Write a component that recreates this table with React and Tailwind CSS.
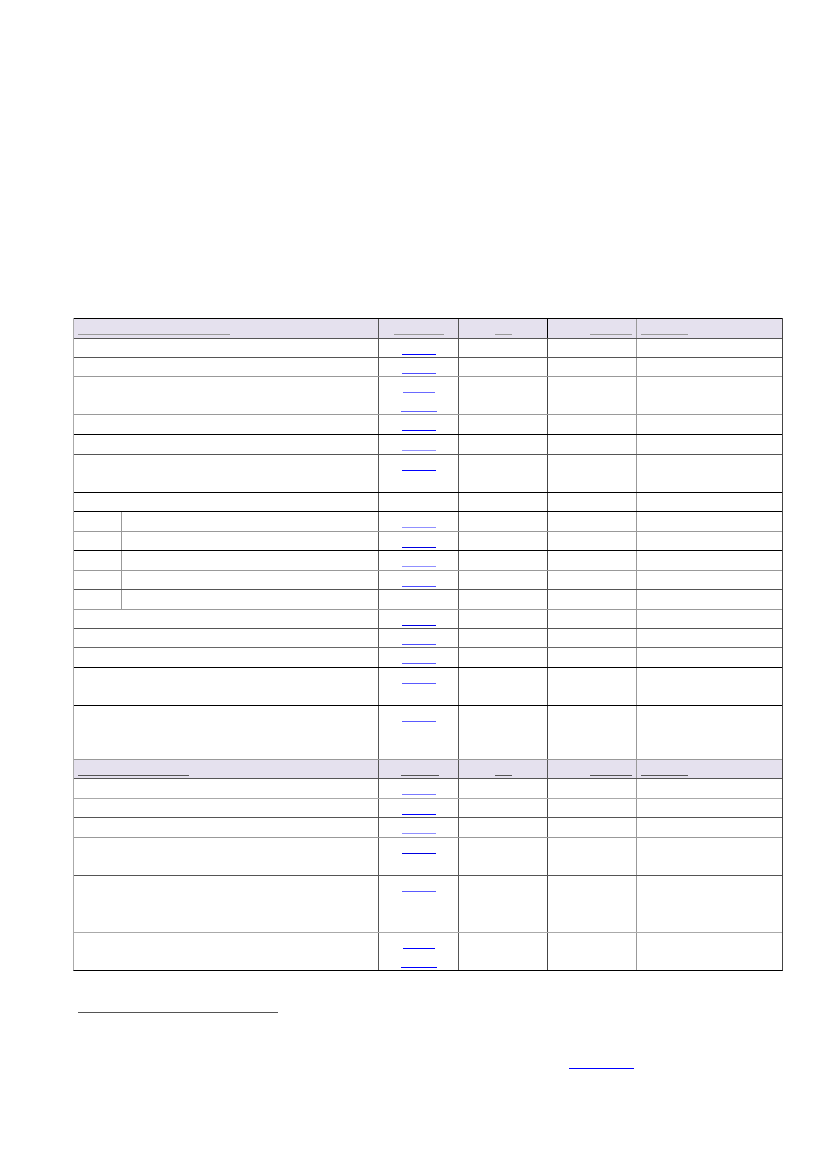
import React from "react";

const rows = [
  { h: 19, line: "border-[#555]", links: ["border-[#0000ff]"] },
  { h: 19, line: "border-[#555]", links: ["border-[#4d4dff]"] },
  { h: 38, line: "border-[#999]", links: ["border-[#6a6aff]", "border-[#6060ff]"], wideLast: true },
  { h: 20, line: "border-[#9a9a9a]", links: ["border-[#0000ff]"] },
  { h: 20, line: "border-[#000]", links: ["border-[#9090ff]"] },
  { h: 38, line: "border-[#555]", links: ["border-[#0000ff]"] },
  { h: 19, line: "border-[#000]", links: [] },
  { h: 20, line: "border-[#000]", links: ["border-[#9090ff]"], sub: true },
  { h: 19, line: "border-[#999]", links: ["border-[#0000e0]"], sub: true },
  { h: 20, line: "border-[#000]", links: ["border-[#9090ff]"], sub: true },
  { h: 19, line: "border-[#999]", links: ["border-[#4d4dff]"], sub: true },
  { h: 20, line: "border-[#555]", links: [], sub: true },
  { h: 19, line: "border-[#999]", links: ["border-[#0000e0]"] },
  { h: 19, line: "border-[#555]", links: ["border-[#4d4dff]"] },
  { h: 20, line: "border-[#666]", links: ["border-[#5a5aff]"] },
  { h: 38, line: "border-[#000]", links: ["border-[#5a5aff]"] },
  { h: 54, line: "border-[#000]", links: ["border-[#5a5aff]"] },
  { header: true, h: 19, line: "border-[#999]", dark: true },
  { h: 20, line: "border-[#555]", links: ["border-[#7a7aff]"] },
  { h: 19, line: "border-[#aaa]", links: ["border-[#0000ff]"] },
  { h: 20, line: "border-[#555]", links: ["border-[#9090ff]"] },
  { h: 38, line: "border-[#999]", links: ["border-[#0000e0]"] },
  { h: 57, line: "border-[#555]", links: ["border-[#5a5aff]"] },
  { h: 38, line: "border-[#aaa]", links: ["border-[#0000ff]", "border-[#0000ff]"], wideLast: true },
];

function LinkLines({ links = [], wideLast }) {
  return (
    <div className="flex flex-col items-center">
      {links.map((c, i) => (
        <div key={i} className="h-[19px] flex justify-center">
          <span
            className={
              "block h-[16px] border-b " +
              c +
              (wideLast && i === links.length - 1 ? " w-[36px]" : i === 0 && wideLast ? " w-[32px]" : " w-[34px]")
            }
          />
        </div>
      ))}
    </div>
  );
}

function HeaderRow({ h, line, dark }) {
  const u = dark ? "border-[#555]" : "border-[#999]";
  return (
    <div className={"flex bg-[#e5e1ee] border-t " + line} style={{ height: h }}>
      <div className="w-[304px] pl-[4px]">
        <span className={"block h-[16px] border-b " + u + (dark ? " w-[111px]" : " w-[152px]")} />
      </div>
      <div className="w-[80px] border-l border-[#555] flex justify-center">
        <span className={"block h-[16px] border-b " + u + (dark ? " w-[38px] ml-[3px]" : " w-[50px]")} />
      </div>
      <div className="w-[89px] border-l border-[#555] flex justify-center">
        <span className={"block h-[16px] border-b " + u + " w-[17px]"} />
      </div>
      <div className={"w-[89px] border-l flex justify-end pr-[4px] " + (dark ? "border-[#555]" : "border-[#000]")}>
        <span className={"block h-[16px] border-b " + u + " w-[42px]"} />
      </div>
      <div className="w-[146px] border-l border-[#999] pl-[4px]">
        <span className={"block h-[16px] border-b " + u + " w-[47px]"} />
      </div>
    </div>
  );
}

function Row({ r }) {
  if (r.header) return <HeaderRow {...r} />;
  return (
    <div className={"flex border-t " + r.line} style={{ height: r.h }}>
      {r.sub ? (
        <div className="w-[304px] flex">
          <div className="w-[47px]" />
          <div className="flex-1 border-l border-[#999]" />
        </div>
      ) : (
        <div className="w-[304px]" />
      )}
      <div className="w-[80px] border-l border-[#555]">
        <LinkLines links={r.links} wideLast={r.wideLast} />
      </div>
      <div className="w-[89px] border-l border-[#555]" />
      <div className="w-[89px] border-l border-[#444]" />
      <div className="w-[146px] border-l border-[#999]" />
    </div>
  );
}

export default function App() {
  return (
    <div className="w-[827px] h-[1169px] bg-white font-['Liberation_Sans',Arial,sans-serif]">
      <div className="pt-[318px] pl-[73px]">
        <div className="w-[710px] border-l border-r border-b border-l-[#aaa] border-r-[#444] border-b-[#000]">
          <HeaderRow h={20} line="border-[#000]" />
          {rows.map((r, i) => (
            <Row key={i} r={r} />
          ))}
        </div>
      </div>

      {/* footnote rule */}
      <div className="mt-[41px] ml-[78px] w-[200px] border-t border-[#555]" />
      <div className="mt-[55px] ml-[569px] w-[65px] border-t border-[#0000ff]" />
    </div>
  );
}
